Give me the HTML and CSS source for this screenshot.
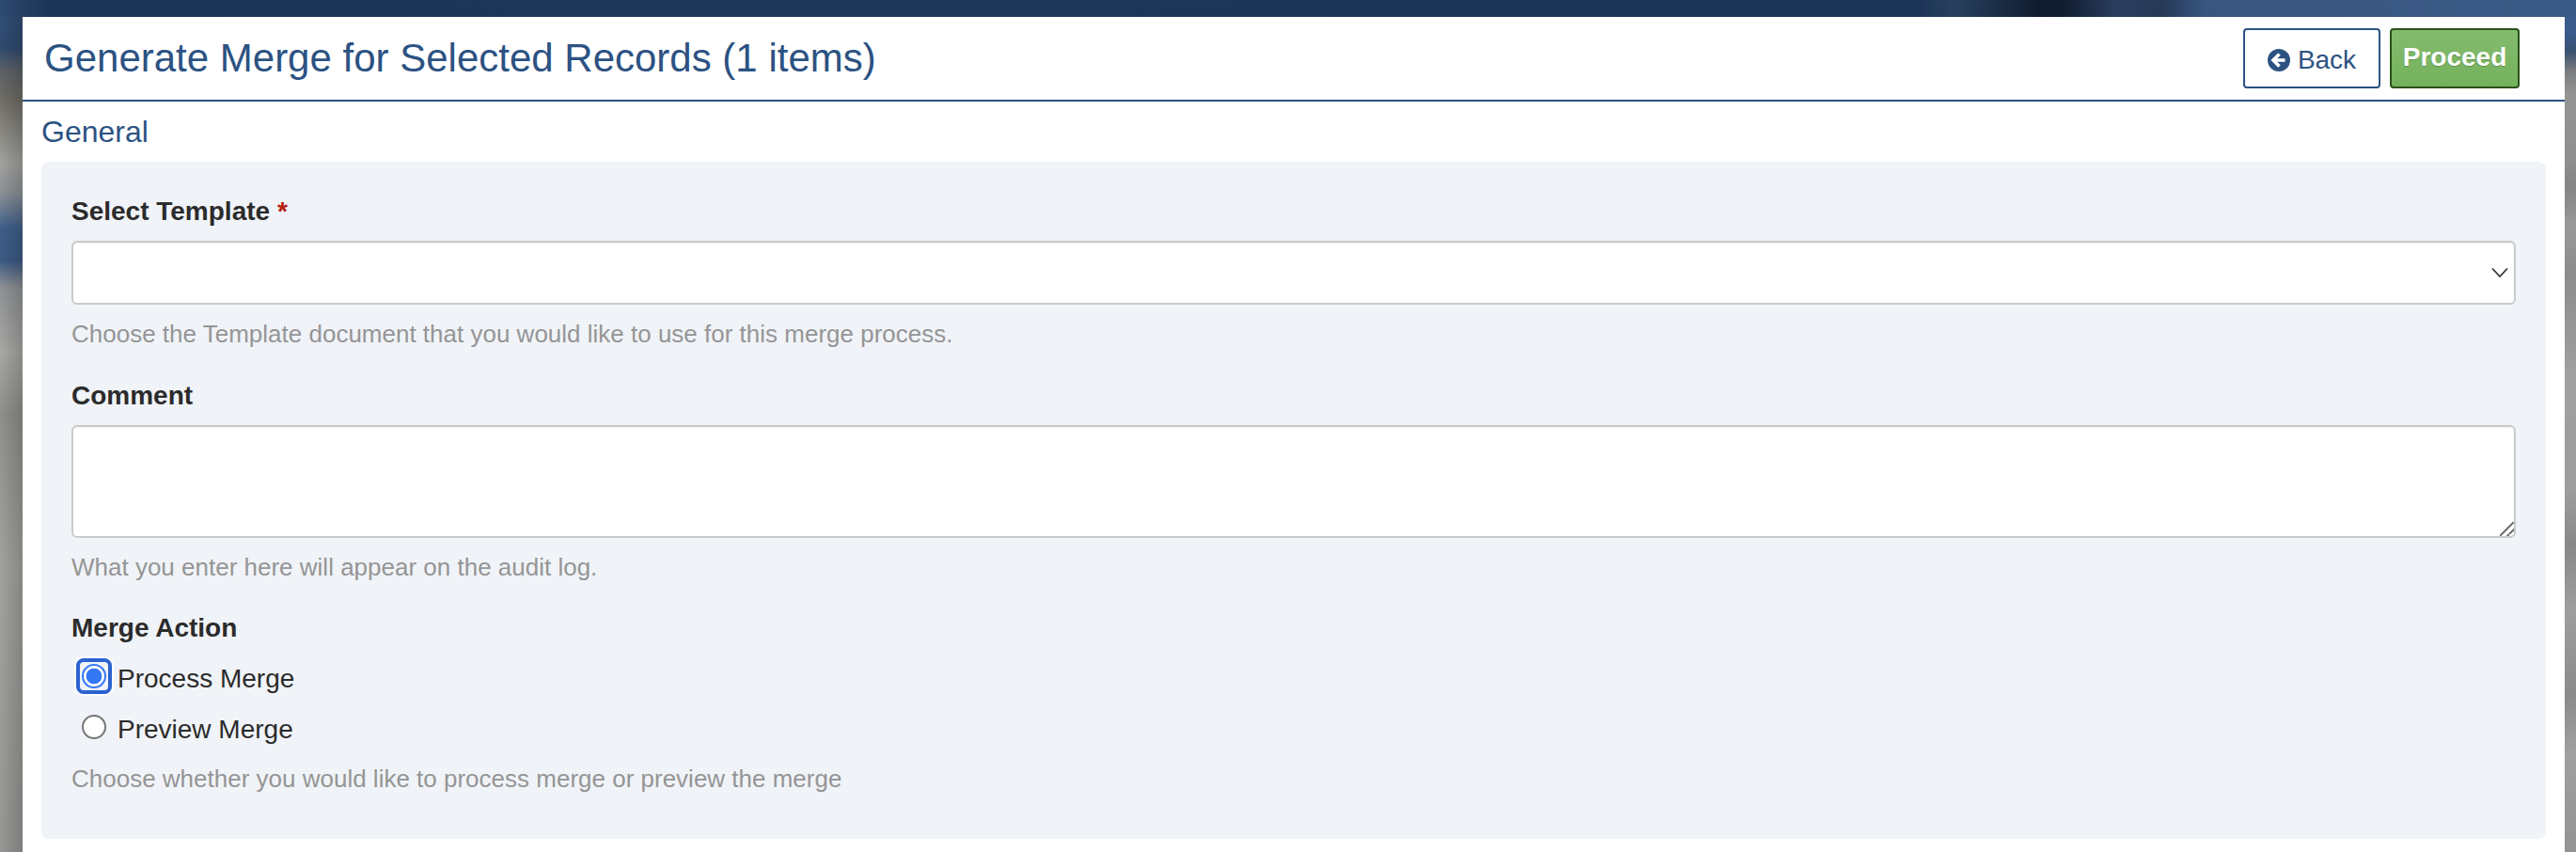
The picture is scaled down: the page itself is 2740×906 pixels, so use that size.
FILE: index.html
```html
<!DOCTYPE html>
<html lang="en">
  <head>
    <meta charset="UTF-8" />
    <title>Generate Merge</title>
    <link rel="stylesheet" href="styles.css">
  </head>
  <body>
    <div class="page">
      <div class="page-header">
        <h1>Generate Merge for Selected Records (1 items)</h1>
        <div class="actions">
          <button type="button" class="btn btn-back">
            <svg class="back-icon" viewBox="0 0 24 24" width="24" height="24">
              <circle cx="12" cy="12" r="12" fill="#2c5282" />
              <path d="M12.5 5.5 L6 12 L12.5 18.5 M6.5 12 H18.5" fill="none" stroke="#fff" stroke-width="3.6" />
            </svg>
            <span>Back</span>
          </button>
          <button type="button" class="btn btn-proceed">Proceed</button>
        </div>
      </div>
      <h2 class="section-title">General</h2>
      <form class="panel">
        <div class="field field-template">
          <label for="template">Select Template <span class="required">*</span></label>
          <div class="select-box" id="template">
            <svg viewBox="0 0 18 12" width="18" height="12">
              <path d="M1 1.5 L9 10 L17 1.5" fill="none" stroke="#333" stroke-width="1.8" />
            </svg>
          </div>
          <p class="hint">Choose the Template document that you would like to use for this merge process.</p>
        </div>
        <div class="field field-comment">
          <label for="comment">Comment</label>
          <textarea id="comment"></textarea>
          <p class="hint">What you enter here will appear on the audit log.</p>
        </div>
        <div class="field field-action">
          <label>Merge Action</label>
          <div class="radio-list">
            <div class="radio-row">
              <span class="radio-wrap focus-ring"><input type="radio" name="action" checked /></span>
              <span>Process Merge</span>
            </div>
            <div class="radio-row">
              <span class="radio-wrap"><input type="radio" name="action" /></span>
              <span>Preview Merge</span>
            </div>
          </div>
          <p class="hint">Choose whether you would like to process merge or preview the merge</p>
        </div>
      </form>
    </div>
  </body>
</html>
```

FILE: styles.css
```css
* {
  box-sizing: border-box;
}
html,
body {
  height: 100%;
}
body {
  margin: 0;
  padding: 18px 12px 0 24px;
  overflow: hidden;
  font-family: 'Liberation Sans', Arial, sans-serif;
  color: #2b2b2b;
  /* blurred wallpaper showing round the page: top, right and left strips */
  background:
    linear-gradient(90deg, #2e4a70 0, #1c3557 50px, #1d3659 800px, #1c3557 2040px, #28405f 2080px, #0f1b2e 2170px, #101d31 2195px, #2a3d5e 2250px, #263a58 2300px, #385680 2345px, #3a5a86 2740px) top / 100% 18px no-repeat,
    linear-gradient(180deg, #3a5f92 0, #3a5b8a 35px, #3b5170 55px, #7a7c7e 75px, #949494 100px, #8f8f8f 170px, #848484 200px, #999 240px, #8c8c8c 290px, #a0a0a0 400px, #9d9d9d 520px, #888 580px, #9f9f9f 650px, #8b8b8b 740px, #a0a0a0 800px, #939393 906px) right / 12px 100% no-repeat,
    linear-gradient(90deg, rgba(0, 0, 0, 0) 0, rgba(0, 0, 0, 0.18) 24px) left / 24px 100% no-repeat,
    linear-gradient(180deg, #33527a 0, #2f4a70 50px, #5c6268 75px, #6f6c65 104px, #a3a39e 173px, #8d9298 205px, #3f5f8a 243px, #3c5a84 277px, #8f9295 306px, #a8a8a4 375px, #8f8f8c 440px, #a2a29f 600px, #979795 906px);
}
.page {
  height: 100%;
  background: #fff;
}
.page-header {
  display: flex;
  justify-content: space-between;
  align-items: center;
  height: 90px;
  padding: 0 48px 2px 23px;
  border-bottom: 2px solid #2c5282;
}
h1 {
  margin: 2px 0 0;
  font-size: 42px;
  font-weight: 400;
  color: #2c5282;
}
.actions {
  display: flex;
  gap: 10px;
  margin-top: 2px;
}
.btn {
  height: 64px;
  border-radius: 4px;
  font-family: inherit;
  font-size: 28px;
}
.btn-back {
  display: flex;
  align-items: center;
  justify-content: center;
  gap: 8px;
  width: 146px;
  padding: 4px 0 0;
  background: #fff;
  border: 2px solid #2c5282;
  color: #2c5282;
}
.btn-proceed {
  width: 138px;
  padding: 0 0 2px;
  background: linear-gradient(#84bb6e, #74b25c);
  border: 2px solid #2a5219;
  color: #fff;
  font-weight: 700;
  text-shadow: 0 1px 1px rgba(0, 0, 0, 0.2);
}
.section-title {
  margin: 14px 0 14px 20px;
  font-size: 32px;
  line-height: 36px;
  font-weight: 400;
  color: #2c5282;
}
.panel {
  margin: 0 20px;
  height: 720px;
  padding: 37px 32px 0;
  background: #f0f3f8;
  border-radius: 8px;
}
label {
  display: block;
  font-size: 28px;
  line-height: 32px;
  font-weight: 700;
}
.required {
  color: #b3200c;
}
.select-box,
textarea {
  display: block;
  width: 100%;
  background: #fff;
  border: 2px solid #c9cacc;
  border-radius: 6px;
  box-shadow: inset 0 1px 2px rgba(0, 0, 0, 0.06);
}
.select-box {
  display: flex;
  justify-content: flex-end;
  align-items: center;
  height: 68px;
  margin-top: 15px;
  padding-right: 6px;
}
textarea {
  height: 120px;
  margin-top: 15px;
}
textarea::-webkit-resizer {
  background: linear-gradient(135deg, transparent 0 46%, #777 46% 54%, transparent 54% 72%, #777 72% 80%, transparent 80%);
}
.hint {
  margin: 16px 0 0;
  font-size: 26px;
  line-height: 30px;
  color: #959595;
}
.field-comment {
  margin-top: 35px;
}
.field-action {
  margin-top: 34px;
}
.radio-list {
  margin-top: 11px;
}
.radio-row {
  display: flex;
  align-items: center;
  gap: 6px;
  height: 54px;
  padding-left: 5px;
  font-size: 28px;
}
.radio-wrap {
  display: flex;
  justify-content: center;
  align-items: center;
  width: 38px;
  height: 38px;
  margin-bottom: 6px;
  border-radius: 8px;
}
.focus-ring {
  border: 4px solid #2a62d0;
  box-shadow: 0 0 0 2px #fff;
}
input[type="radio"] {
  appearance: none;
  flex: none;
  width: 26px;
  height: 26px;
  margin: 0;
  background: #fff;
  border: 2px solid #767676;
  border-radius: 50%;
}
input[type="radio"]:checked {
  border-color: #3478f6;
  background: radial-gradient(circle, #3478f6 0 8px, #fff 8.7px);
}
.field-action .hint {
  margin-top: 10px;
}
```
